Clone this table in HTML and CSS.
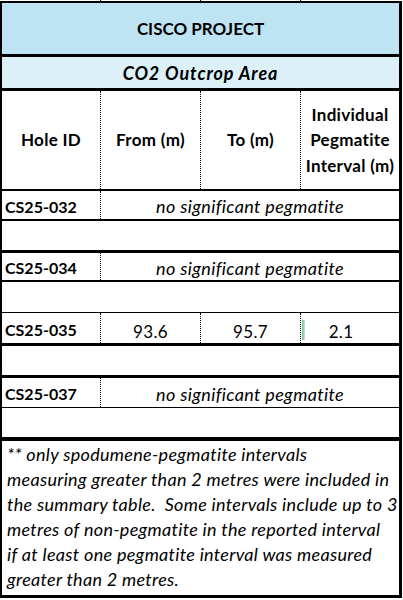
FILE: index.html
```html
<!DOCTYPE html>
<html>
<head>
<meta charset="utf-8">
<link rel="stylesheet" href="styles.css">
</head>
<body>
<div class="ticks"><span></span><span class="dl"></span><span class="dl"></span><span class="dl"></span></div>
<div class="sheet">
  <div class="title">CISCO PROJECT</div>
  <div class="subtitle">CO2 Outcrop Area</div>
  <div class="row head">
    <div class="cell">Hole ID</div>
    <div class="cell dl">From (m)</div>
    <div class="cell dl">To (m)</div>
    <div class="cell dl">Individual Pegmatite Interval (m)</div>
  </div>
  <div class="row r1 data">
    <div class="cell id">CS25-032</div>
    <div class="cell dl span3 nsp">no significant pegmatite</div>
  </div>
  <div class="row r2 blank"></div>
  <div class="row r3 data">
    <div class="cell id">CS25-034</div>
    <div class="cell dl span3 nsp">no significant pegmatite</div>
  </div>
  <div class="row r4 blank"></div>
  <div class="row r5 data">
    <div class="cell id">CS25-035</div>
    <div class="cell dl num">93.6</div>
    <div class="cell dl num">95.7</div>
    <div class="cell dl num bar"><span class="databar"></span><span class="val">2.1</span></div>
  </div>
  <div class="row r6 blank"></div>
  <div class="row r7 data">
    <div class="cell id">CS25-037</div>
    <div class="cell dl span3 nsp">no significant pegmatite</div>
  </div>
  <div class="row r8 blank"></div>
  <div class="note">** only spodumene-pegmatite intervals<br>measuring greater than 2 metres were included in<br>the summary table.&nbsp; Some intervals include up to 3<br>metres of non-pegmatite in the reported interval<br>if at least one pegmatite interval was measured<br>greater than 2 metres.</div>
</div>
</body>
</html>
```
FILE: styles.css
```css
html, body {
  margin: 0;
  padding: 0;
  background: #fff;
}
body {
  font-family: Lato, "Open Sans", sans-serif;
  font-size: 16px;
  color: #000;
  width: 403px;
  height: 600px;
  overflow: hidden;
}
.ticks {
  display: grid;
  grid-template-columns: 100px 100px 100px 100px;
  height: 1px;
}
.ticks .dl {
  border-left: 1px dotted #000;
}
.sheet {
  width: 397px;
  border-left: 2px solid #000;
  border-right: 3px solid #000;
  border-top: 2px solid #000;
  border-bottom: 3px solid #000;
}
.title {
  height: 51px;
  background: #bee3f3;
  border-bottom: 3px solid #000;
  display: flex;
  align-items: center;
  justify-content: center;
  font-weight: 700;
  font-size: 17px;
}
.subtitle {
  height: 31px;
  background: #dcf0f8;
  border-bottom: 3px solid #000;
  display: flex;
  align-items: center;
  justify-content: center;
  font-weight: 700;
  font-style: italic;
  font-size: 18px;
  letter-spacing: 0.9px;
}
.row {
  display: grid;
  grid-template-columns: 98px 100px 100px 99px;
}
.cell {
  display: flex;
  align-items: center;
  justify-content: center;
  text-align: center;
}
.dl {
  border-left: 1px dotted #000;
}
.head {
  height: 98px;
  border-bottom: 2px solid #000;
  font-weight: 700;
  font-size: 17px;
  letter-spacing: 0.3px;
  line-height: 25.5px;
}
.head .cell:last-child {
  padding: 0 1px;
}
.span3 {
  grid-column: 2 / 5;
}
.id {
  justify-content: flex-start;
  padding-left: 3px;
  font-weight: 700;
}
.nsp {
  font-style: italic;
  font-size: 18px;
  letter-spacing: 0.35px;
}
.r1 { height: 28px; border-bottom: 2px solid #000; }
.r2 { height: 29px; border-bottom: 3px solid #000; }
.r3 { height: 27px; border-bottom: 2px solid #000; }
.r4 { height: 30px; border-bottom: 1px solid #000; }
.r5 { height: 30px; border-bottom: 3px solid #000; }
.r6 { height: 29px; border-bottom: 3px solid #000; }
.r7 { height: 29px; border-bottom: 1px solid #000; }
.r8 { height: 29px; border-bottom: 4px solid #000; }
.data .cell {
  padding-top: 2px;
}
.num {
  padding-top: 6px !important;
  font-size: 17px;
  letter-spacing: 0.3px;
}
.bar {
  justify-content: flex-start;
  align-items: stretch;
}
.databar {
  width: 3px;
  margin: 1px 0 3px 1px;
  background: linear-gradient(to right, #63c384, #c8ebd3);
}
.val {
  flex: 1;
  display: flex;
  align-items: center;
  justify-content: center;
  padding-right: 22px;
}
.note {
  height: 154px;
  box-sizing: border-box;
  padding: 1px 0 0 5px;
  font-style: italic;
  line-height: 25px;
  font-size: 18px;
  letter-spacing: 0.3px;
  white-space: nowrap;
  overflow: hidden;
}
```
